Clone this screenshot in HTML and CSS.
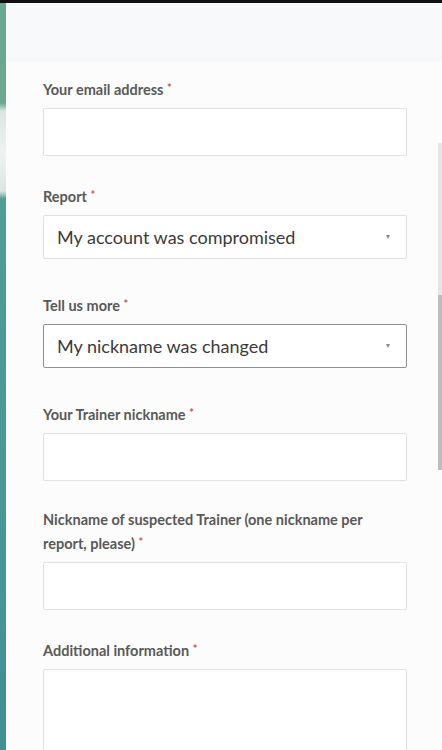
FILE: index.html
```html
<!DOCTYPE html>
<html lang="en">
  <head>
    <meta charset="utf8">
    <meta name="viewport" content="width=device-width, initial-scale=1">
    <title>Submit a request</title>
    <link rel="stylesheet" href="styles.css">
  </head>

  <body>
    <div class="topbar"></div>
    <div class="frame">
      <div class="edge"></div>

      <main class="form">
        <div class="field">
          <label class="label">Your email address <span class="req">*</span></label>
          <div class="input"></div>
        </div>

        <div class="field field-select">
          <label class="label">Report <span class="req">*</span></label>
          <div class="select">
            <span>My account was compromised</span>
            <i class="arrow"></i>
          </div>
        </div>

        <div class="field field-select">
          <label class="label">Tell us more <span class="req">*</span></label>
          <div class="select select-focus">
            <span>My nickname was changed</span>
            <i class="arrow"></i>
          </div>
        </div>

        <div class="field">
          <label class="label">Your Trainer nickname <span class="req">*</span></label>
          <div class="input"></div>
        </div>

        <div class="field">
          <label class="label">Nickname of suspected Trainer (one nickname per report, please) <span class="req">*</span></label>
          <div class="input"></div>
        </div>

        <div class="field">
          <label class="label">Additional information <span class="req">*</span></label>
          <div class="input textarea"></div>
        </div>
      </main>

      <div class="scrollbar"><div class="thumb"></div></div>
    </div>
  </body>
</html>
```

FILE: styles.css
```css
:root {
  font-family: Lato, "Open Sans", "Liberation Sans", sans-serif;
}

body {
  margin: 0;
  background-color: #fbfbfb;
  height: 750px;
  overflow: hidden;
}

.topbar {
  height: 3px;
  background-color: #111;
}

.frame {
  position: relative;
  display: flex;
  height: 747px;
  overflow: hidden;
}

.edge {
  width: 6px;
  flex-shrink: 0;
  background: linear-gradient(to bottom,
    #6aa88f 0, #6aa88f 100px,
    #d9e7e2 108px, #eef3f1 150px, #d9e7e2 188px,
    #4f9d94 196px, #4a9896 450px, #3f8f96 747px);
}

.form {
  flex: 1;
  padding: 74px 35px 0 37px;
  background: linear-gradient(to bottom, #f8f9fb 0, #f8f9fb 57px, #fcfcfc 60px);
}

.field {
  margin-bottom: 28px;
}
.field-select {
  margin-bottom: 34px;
}

.label {
  display: block;
  font-size: 14.5px;
  font-weight: bold;
  line-height: 22px;
  color: #595959;
  margin-bottom: 7px;
  padding-right: 20px;
}

.req {
  color: #d0525a;
  font-size: 11px;
  vertical-align: 3px;
}

.input {
  height: 46px;
  background-color: #fff;
  border: 1px solid #e2e2e2;
  border-radius: 2px;
  box-shadow: 0 0 1px rgba(0, 0, 0, 0.05);
}

.textarea {
  height: 100px;
}

.select {
  display: flex;
  align-items: center;
  justify-content: space-between;
  height: 42px;
  padding: 0 16px 0 13px;
  background-color: #fff;
  border: 1px solid #e0e0e0;
  border-radius: 2px;
  font-size: 18px;
  color: #3a3a3a;
}

.select-focus {
  border-color: #8f8f8f;
}

.arrow {
  width: 0;
  height: 0;
  border-left: 2px solid transparent;
  border-right: 2px solid transparent;
  border-top: 4px solid #888;
}

.scrollbar {
  position: absolute;
  right: 0;
  top: 140px;
  width: 4px;
  height: 327px;
  background-color: #e6e6e6;
}
.scrollbar .thumb {
  margin-top: 152px;
  height: 175px;
  background-color: #bdbdbd;
}
```
